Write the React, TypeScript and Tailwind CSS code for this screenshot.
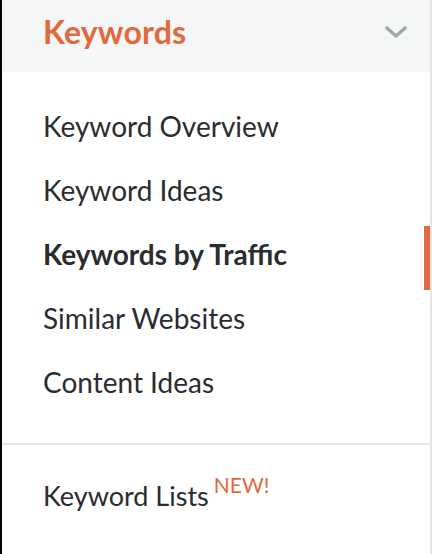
import React from "react";

const items = [
  { label: "Keyword Overview" },
  { label: "Keyword Ideas" },
  { label: "Keywords by Traffic", active: true },
  { label: "Similar Websites" },
  { label: "Content Ideas" },
];

const Chevron = () => (
  <svg width="24" height="14" viewBox="0 0 24 14" fill="none">
    <path
      d="M3 3l9 8 9-8"
      stroke="#9ca8aa"
      strokeWidth="3.4"
      strokeLinecap="round"
      strokeLinejoin="round"
    />
  </svg>
);

export default function App() {
  return (
    <div
      className="flex w-[440px] h-[554px] bg-white overflow-hidden"
      style={{ fontFamily: "Lato, 'Open Sans', sans-serif" }}
    >
      <div className="w-[2px] bg-black" />
      <div className="flex flex-col w-[430px] border-r-2 border-[#e3e5e5]">
        <div className="h-[72px] bg-[#f5f6f6] flex items-center justify-between pl-[41px] pr-[22px] pb-[8px]">
          <span className="text-[32px] font-bold text-[#e0693e] tracking-[0.2px]">
            Keywords
          </span>
          <Chevron />
        </div>
        <div className="flex flex-col pt-[26px] pb-[25px] border-b-2 border-[#e6e8e8]">
          {items.map((it) => (
            <div
              key={it.label}
              className="h-16 flex items-center justify-between pl-[41px]"
            >
              <span
                className={
                  "text-[28px] text-[#2a2c30] -translate-y-[4px] " +
                  (it.active ? "font-bold" : "font-normal")
                }
              >
                {it.label}
              </span>
              {it.active && <div className="w-[6px] h-16 bg-[#e0693e]" />}
            </div>
          ))}
        </div>
        <div className="h-16 flex items-center pl-[41px] mt-[19px]">
          <span className="text-[27px] text-[#2a2c30]">Keyword Lists</span>
          <span className="text-[21px] text-[#e0693e] ml-[5px] -translate-y-[11px]">
            NEW!
          </span>
        </div>
      </div>
    </div>
  );
}
